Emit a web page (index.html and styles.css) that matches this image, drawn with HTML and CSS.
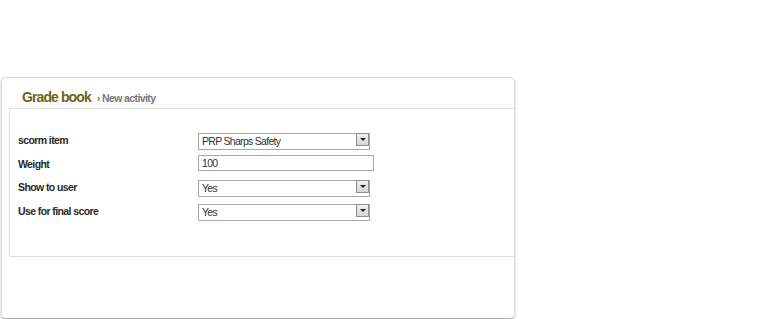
FILE: index.html
```html
<!DOCTYPE html>
<html lang="en">
<head>
    <meta charset="UTF-8">
    <meta name="viewport" content="width=device-width, initial-scale=1.0">
    <title>Grade book - New activity</title>
    <link rel="stylesheet" href="styles.css">
</head>
<body>
    <div class="card">
        <div class="gb-head">
            <h1>Grade book</h1>
            <span class="crumb">&rsaquo; New activity</span>
        </div>
        <div class="gb-body">
            <form class="gb-form">
                <label for="item">scorm item</label>
                <span class="sel">
                    <select id="item" name="item">
                        <option>PRP Sharps Safety</option>
                    </select>
                </span>

                <label for="weight">Weight</label>
                <input type="text" id="weight" name="weight" value="100">

                <label for="visible">Show to user</label>
                <span class="sel">
                    <select id="visible" name="visible">
                        <option>Yes</option>
                        <option>No</option>
                    </select>
                </span>

                <label for="final">Use for final score</label>
                <span class="sel">
                    <select id="final" name="final">
                        <option>Yes</option>
                        <option>No</option>
                    </select>
                </span>
            </form>
        </div>
    </div>
</body>
</html>
```

FILE: styles.css
```css
body {
    margin: 0;
    background-color: #fff;
    font-family: "Liberation Sans", Arial, sans-serif;
    color: #222;
}
.card {
    margin: 77px 0 0 1px;
    width: 512px;
    height: 240px;
    border: 1px solid #dcdcdc;
    border-bottom-color: #b0b0b0;
    border-radius: 5px;
    box-shadow: 0 1px 2px rgba(0, 0, 0, 0.3);
}
.gb-head {
    display: flex;
    align-items: baseline;
    gap: 6px;
    height: 31px;
    box-sizing: border-box;
    margin-left: 7px;
    padding: 11px 0 0 13px;
    border-bottom: 1px solid #dedede;
}
h1 {
    margin: 0;
    font-size: 14px;
    line-height: 17px;
    letter-spacing: -0.9px;
    color: #6b6518;
}
.crumb {
    font-size: 10.5px;
    font-weight: bold;
    letter-spacing: -0.6px;
    color: #777;
}
.gb-body {
    margin-left: 7px;
    height: 147px;
    border-left: 1px solid #dedede;
    border-bottom: 1px solid #dedede;
}
.gb-form {
    display: grid;
    grid-template-columns: 180px auto;
    grid-template-rows: 17px 16px 17px 17px;
    row-gap: 7px;
    align-items: center;
    justify-content: start;
    margin: 0;
    padding: 22px 0 0 8px;
}
.gb-form label {
    padding-top: 1px;
    font-size: 10.5px;
    font-weight: bold;
    letter-spacing: -0.6px;
    color: #2a2a2a;
}
.gb-form input[type="text"],
.gb-form select {
    box-sizing: border-box;
    height: 17px;
    margin: 0;
    padding: 0 3px;
    border: 1px solid #a9a9a9;
    border-radius: 0;
    background: #fff;
    font-family: inherit;
    font-size: 10.5px;
    letter-spacing: -0.7px;
    color: #333;
    outline: none;
}
.gb-form input[type="text"] {
    width: 176px;
    height: 16px;
}
.sel {
    position: relative;
    display: block;
    width: 172px;
    height: 17px;
}
.sel select {
    -webkit-appearance: none;
    appearance: none;
    width: 172px;
}
.sel::after {
    content: "";
    position: absolute;
    top: 2px;
    right: 1px;
    width: 11px;
    height: 11px;
    border: 1px solid #8e8e8e;
    background: linear-gradient(#f2f2f2, #d4d4d4);
    pointer-events: none;
}
.sel::before {
    content: "";
    position: absolute;
    top: 7px;
    right: 4px;
    z-index: 1;
    border-left: 3px solid transparent;
    border-right: 3px solid transparent;
    border-top: 3px solid #222;
    pointer-events: none;
}
```
